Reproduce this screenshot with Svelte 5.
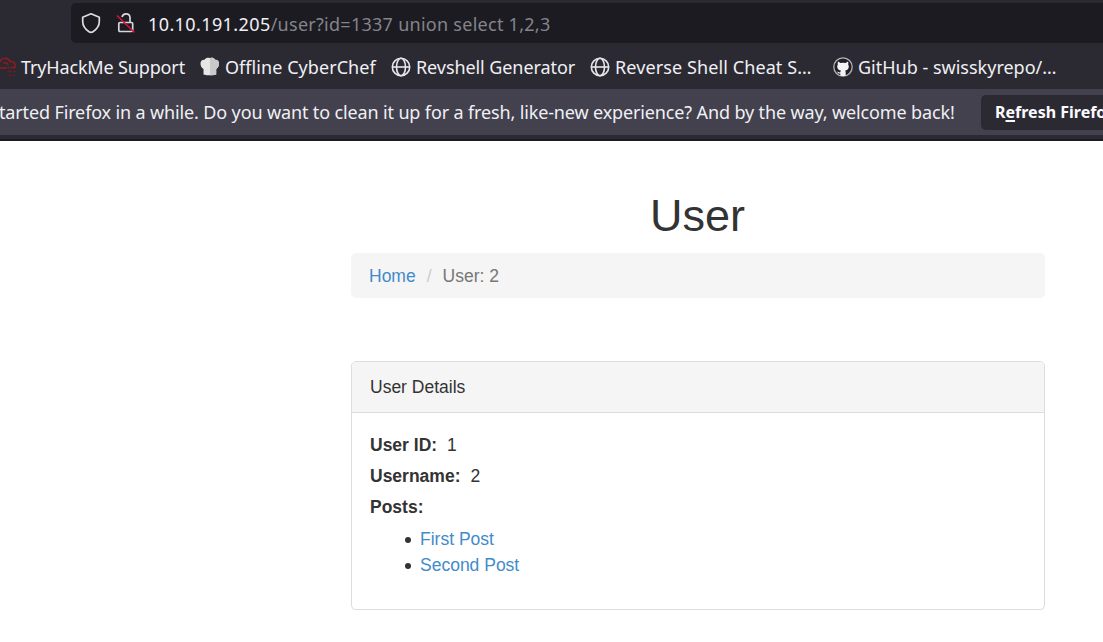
<script>
  const posts = ['First Post', 'Second Post'];
</script>

{#snippet globe()}
  <svg class="icon" viewBox="0 0 20 20" fill="none" stroke="#e6e6ea" stroke-width="1.6">
    <circle cx="10" cy="10" r="8.7" /><ellipse cx="10" cy="10" rx="4.5" ry="8.7" /><path d="M1.3 10h17.4" />
  </svg>
{/snippet}

<div class="chrome">
  <div class="nav">
    <div class="urlbar">
      <svg class="shield" viewBox="0 0 20 22" fill="none" stroke="#dedee2" stroke-width="1.7" stroke-linejoin="round">
        <path d="M10 1.800 18.300 5.200v4.300c0 4.500-3 8-6.300 10.300q-2 1-4 0C4.700 17.500 1.700 14 1.700 9.500V5.200Z" />
      </svg>
      <svg class="lock" viewBox="0 0 20 22" fill="none">
        <path d="M4 10.500h11.500q1.200 0 1.200 1.200v6.600q0 1.200-1.200 1.200H4q-1.200 0-1.200-1.200v-6.600q0-1.200 1.200-1.200ZM6 5C6.500 2.800 8 1.800 10 1.800c2.500 0 4 1.800 4 4v4.700" stroke="#d6d6da" stroke-width="1.700" />
        <path d="M1 3.500 18.500 20.500" stroke="#d80f3c" stroke-width="1.700" />
      </svg>
      <span class="url"><span class="host">10.10.191.205</span><span class="path">/user?id=1337 union select 1,2,3</span></span>
    </div>
  </div>
  <div class="bookmarks">
    <div class="bm a">
      <svg class="icon" viewBox="0 0 20 20" fill="none" stroke="#96191f" stroke-width="1.500">
        <path d="M4 5C4.500 1 12 -.500 14 4.500c4-.3 6 2.500 4.800 6H14.500M7.500 6.500c2-1.500 4-.500 4.500 1.500M4 11h6.500M11.500 10.500h1.500" />
        <path d="M11.500 14.500h4M17 14.500h2.500M13 18.500h2M16.500 18.500h2" stroke="#6e1d23" />
      </svg><span class="label">TryHackMe Support</span>
    </div>
    <div class="bm b">
      <svg class="icon" viewBox="0 0 20 20">
        <path d="M3.500 17.500V12C1.500 11 .5 9 .5 6.500.5 4 2 2.500 4.500 2.700 6 .6 8.500.3 10 1.200 12 .3 14 .8 15 2.700c2.500-.2 4 1.500 4 3.800 0 2.500-1 4.500-2.800 5.500v5.500Q10 19.200 3.500 17.500Z" fill="#e6e6e6" />
        <path d="M10 1.200C12 .3 14 .8 15 2.700c2.500-.2 4 1.500 4 3.800 0 2.500-1 4.500-2.800 5.500v5.500q-3 .9-6.200.8Z" fill="#c9c9c9" />
      </svg><span class="label">Offline CyberChef</span>
    </div>
    <div class="bm c">{@render globe()}<span class="label">Revshell Generator</span></div>
    <div class="bm d">{@render globe()}<span class="label">Reverse Shell Cheat S…</span></div>
    <div class="bm e">
      <svg class="icon" viewBox="0 0 20 20">
        <circle cx="10" cy="10" r="9.200" fill="#202026" stroke="#b4b4b8" stroke-width="1.300" />
        <path d="M5 4.500 7.500 6q2.500-.6 5 0L15 4.500q.6 1.500.2 3c1.300 2.500.5 5.500-3 6 .6.800.5 2 .5 5.200q-2.700.8-5.400 0v-2.200c-2 .4-2.600-.7-3.300-2 1.300 0 1.800 1.300 3.400.8q0-1 .5-1.700C4.500 13 3.500 10 4.800 7.500q-.4-1.500.2-3Z" fill="#f4f4f4" />
      </svg><span class="label">GitHub - swisskyrepo/…</span>
    </div>
  </div>
  <div class="notice">
    <span class="message">tarted Firefox in a while. Do you want to clean it up for a fresh, like-new experience? And by the way, welcome back!</span>
    <button>R<u>e</u>fresh Firefox…</button>
  </div>
</div>

<main>
  <h1>User</h1>
  <nav><a href="#home">Home</a><i>/</i><span>User: 2</span></nav>
  <section>
    <header>User Details</header>
    <div class="body">
      <p><b>User ID:</b><span>1</span></p>
      <p><b>Username:</b><span>2</span></p>
      <p><b>Posts:</b></p>
      <ul>
        {#each posts as post}<li><a href="#post">{post}</a></li>{/each}
      </ul>
    </div>
  </section>
</main>

<style>
  :global(body) { background: #fff; overflow: hidden; }
  * { box-sizing: border-box; }
  .chrome { height: 141px; background: #2b2a33; color: #f0f0f4; font-family: "Noto Sans", sans-serif; font-size: 18px; white-space: nowrap; overflow: hidden; border-bottom: 2px solid #1c1b22; }
  .nav { padding: 3px 0 0 71px; height: 43px; }
  .urlbar { display: flex; align-items: center; width: 1060px; height: 40px; background: #1c1b22; border-radius: 5px; padding-left: 10px; }
  .shield { width: 20px; height: 22px; flex: none; }
  .lock { width: 20px; height: 22px; margin-left: 15px; flex: none; }
  .url { margin-left: 12px; display: flex; line-height: 24px; padding-top: 1px; }
  .host { letter-spacing: .4px; }
  .path { color: #85848a; letter-spacing: .27px; }
  .bookmarks { display: flex; align-items: center; height: 46px; padding-top: 1px; }
  .bm { display: flex; align-items: center; height: 26px; flex: none; }
  .bm .icon { width: 20px; height: 20px; flex: none; }
  .label { margin-left: 5px; }
  .a { width: 204px; margin-left: -4px; letter-spacing: -.15px; }
  .b { width: 191px; letter-spacing: .06px; }
  .c { width: 199px; letter-spacing: -.08px; }
  .d { width: 243px; letter-spacing: .1px; }
  .notice { display: flex; align-items: center; height: 46px; background: #42414d; }
  .message { width: 982px; margin-left: -1px; flex: none; letter-spacing: -.137px; }
  button { height: 35px; width: 160px; flex: none; border: 0; border-radius: 5px; background: #2b2a33; color: #fbfbfe; padding: 0 0 0 14px; text-align: left; font: bold 16px "Noto Sans", sans-serif; }
  u { text-decoration-thickness: 2px; text-underline-offset: 2px; }

  main { width: 694px; margin-left: 350.5px; font: 17.5px/26px "Liberation Sans", Arial, sans-serif; color: #333; }
  h1 { margin: 0; padding-top: 50px; height: 112px; text-align: center; font-size: 45px; line-height: 50px; font-weight: 400; }
  nav { display: flex; height: 45px; padding: 1px 18.5px 0; line-height: 45px; background: #f5f5f5; border-radius: 5px; color: #777; }
  nav i { font-style: normal; color: #ccc; margin: 0 11px; }
  a { color: #428bca; text-decoration: none; }
  section { margin-top: 63px; height: 249px; border: 1px solid #ddd; border-radius: 5px; box-shadow: 0 1px 1px rgba(0,0,0,.05); }
  header { height: 51px; background: #f5f5f5; border-bottom: 1px solid #ddd; border-radius: 4px 4px 0 0; padding: 0 18.5px; line-height: 51px; }
  .body { padding: 19px 18.5px; }
  p { margin: 0 0 5px; }
  p span { margin-left: 10px; }
  ul { margin: 6px 0 0; padding: 0; list-style: none; }
  li { display: flex; align-items: center; padding-left: 35px; }
  li::before { content: ""; width: 6px; height: 6px; margin: 2px 9px 0 0; border-radius: 50%; background: #333; }
</style>
